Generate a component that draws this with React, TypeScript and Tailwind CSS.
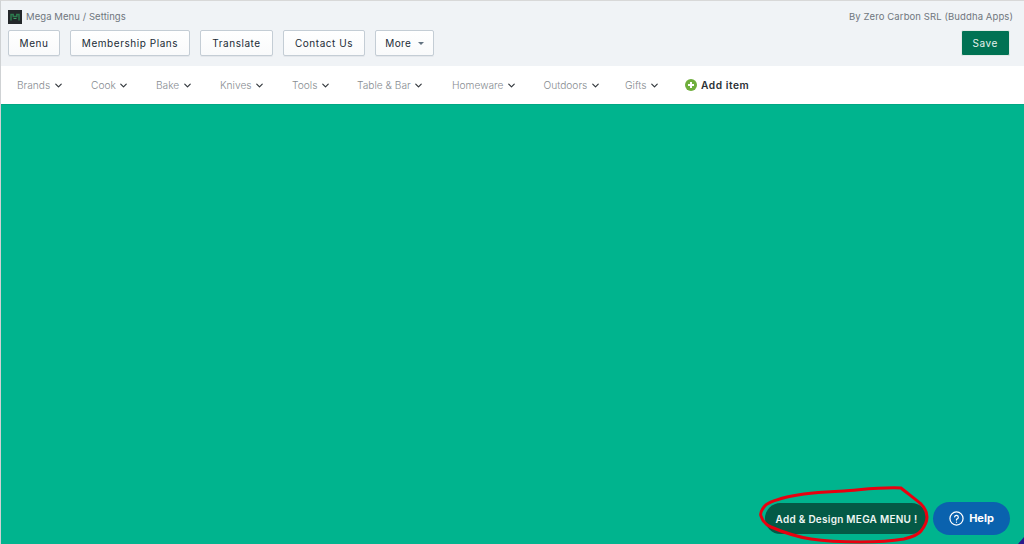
import { ChevronDown } from "lucide-react";

const navItems = [
  { label: "Brands", width: "w-[74px]" },
  { label: "Cook", width: "w-[65px]" },
  { label: "Bake", width: "w-[64px]" },
  { label: "Knives", width: "w-[72px]" },
  { label: "Tools", width: "w-[65px]" },
  { label: "Table & Bar", width: "w-[95px]" },
  { label: "Homeware", width: "w-[91.5px]" },
  { label: "Outdoors", width: "w-[81.5px]" },
  { label: "Gifts", width: "w-[60px]" },
];

function HeaderButton({ label, width }: { label: string; width: string }) {
  return (
    <button className={`${width} h-[26px] flex items-center justify-center rounded-[2px] border border-[#c4cdd5] bg-gradient-to-b from-white to-[#f9fafb] text-[10px] tracking-[0.55px] text-[#212b36] shadow-[0_1px_0_rgba(22,29,37,0.05)]`}>
      {label}
    </button>
  );
}

export default function App() {
  return (
    <div className="relative h-[544px] w-[1024px] overflow-hidden bg-white font-['Inter',sans-serif]">
      <div className="flex h-full flex-col border-l border-t border-l-[#cfd2d4] border-t-[#d8d8d8]">
        <header className="h-[65px] shrink-0 bg-[#f0f3f6] pl-[7px] pr-[11px]">
          <div className="flex h-[29px] items-center justify-between pt-[3px]">
            <div className="flex items-center gap-[4px]">
              <svg width="14" height="14" viewBox="0 0 14 14">
                <rect width="14" height="14" fill="#23272a" />
                <path d="M3 10.5V4.5h2.2v2h3.6v-2H11v6" fill="none" stroke="#2c7a4e" strokeWidth="1.5" />
                <path d="M5.5 8.5h3" stroke="#3fa066" strokeWidth="1" />
              </svg>
              <span className="text-[9.5px] tracking-[0.07px] text-[#6f767d]">Mega Menu / Settings</span>
            </div>
            <span className="text-[9.5px] tracking-[0.1px] text-[#6f767d]">By Zero Carbon SRL (Buddha Apps)</span>
          </div>
          <div className="flex items-center justify-between pr-[3px]">
            <div className="flex items-center gap-[10px]">
              <HeaderButton label="Menu" width="w-[52px]" />
              <HeaderButton label="Membership Plans" width="w-[120px]" />
              <HeaderButton label="Translate" width="w-[73px]" />
              <HeaderButton label="Contact Us" width="w-[82px]" />
              <button className="flex h-[26px] w-[58.5px] items-center justify-center gap-[7px] rounded-[2px] border border-[#c4cdd5] bg-gradient-to-b from-white to-[#f9fafb] pl-[1px] text-[10px] tracking-[0.4px] text-[#212b36] shadow-[0_1px_0_rgba(22,29,37,0.05)]">
                More
                <span className="h-0 w-0 border-x-[3.5px] border-t-[3.5px] border-x-transparent border-t-[#637381]" />
              </button>
            </div>
            <button className="h-[26px] w-[49.5px] rounded-[2px] border border-[#e3ece8] bg-[#007253] text-[10px] tracking-[0.55px] text-[#e4f1ec]">
              Save
            </button>
          </div>
        </header>

        <nav className="flex h-[38px] shrink-0 items-center pl-[16px] pt-[1px]">
          {navItems.map((item) => (
            <div key={item.label} className={`${item.width} flex shrink-0 items-center gap-[2.5px]`}>
              <span className="text-[10.2px] font-light text-[#878c91]">{item.label}</span>
              <ChevronDown size={11} strokeWidth={2.6} className="text-[#33383d]" />
            </div>
          ))}
          <div className="flex items-center gap-[4px]">
            <svg width="12" height="12" viewBox="0 0 12 12">
              <circle cx="6" cy="6" r="6" fill="#6fae3c" />
              <path d="M6 3v6M3 6h6" stroke="#fff" strokeWidth="2" />
            </svg>
            <span className="text-[10.2px] font-semibold tracking-[0.55px] text-[#2a2f34]">Add item</span>
          </div>
        </nav>

        <main className="flex-1 border-t border-[#00a884] bg-[#00b48e]" />
      </div>

      <button className="absolute left-[765px] top-[503px] h-[31px] w-[162px] rounded-full bg-[#045a46] pl-[1px] pt-[1px] text-[10px] font-semibold tracking-[0.26px] text-[#eef6f3]">
        Add &amp; Design MEGA MENU !
      </button>
      <button className="absolute left-[933px] top-[502px] flex h-[33px] w-[77px] items-center justify-center gap-[5px] rounded-full bg-[#0a62ae] text-[11px] font-bold text-white">
        <svg width="15" height="15" viewBox="0 0 24 24" fill="none" stroke="#fff" strokeWidth="2" strokeLinecap="round">
          <circle cx="12" cy="12" r="10.5" />
          <path d="M9 9.3a3 3 0 0 1 5.9.9c0 2-3 2.5-3 4.2" />
          <path d="M12 17.8h.01" />
        </svg>
        Help
      </button>

      <svg className="pointer-events-none absolute left-0 top-0" width="1024" height="544" fill="none">
        <path
          d="M901 488C880 487 860 490 844 491C820 492 800 494 787 497C775 500 766 503 764 507C761 511 760 514 761 516C763 522 766 525 771 527C785 533 798 537 811 539C830 542 845 542 861 542C878 542 892 541 904 539C912 537 918 535 921 531C925 526 927 522 927 517C927 512 925 508 921 504C914 498 907 493 901 488Z"
          stroke="#e8000f"
          strokeWidth="3"
        />
        <path d="M1024 537L1018 544H1024Z" fill="#2a1a8c" />
      </svg>
    </div>
  );
}
